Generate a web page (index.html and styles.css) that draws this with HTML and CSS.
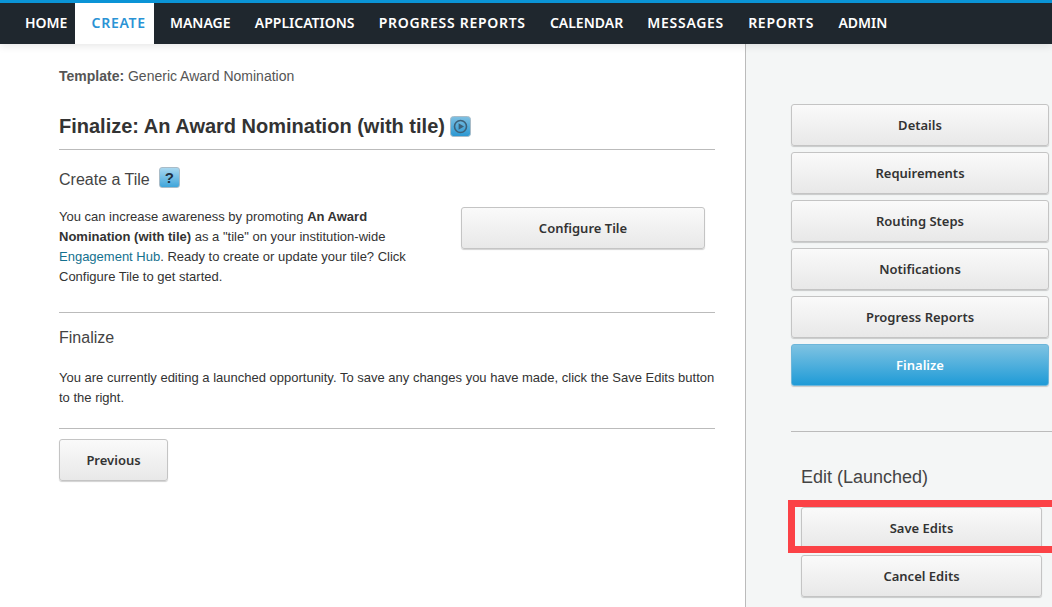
FILE: index.html
```html
<!DOCTYPE html>
<html lang="en">
<head>
<meta charset="utf-8">
<title>Finalize: An Award Nomination (with tile)</title>
<link rel="stylesheet" href="styles.css">
</head>
<body>
<nav class="topnav">
  <a class="nav-item">HOME</a>
  <a class="nav-item nav-wide active">CREATE</a>
  <a class="nav-item">MANAGE</a>
  <a class="nav-item">APPLICATIONS</a>
  <a class="nav-item nav-wide">PROGRESS REPORTS</a>
  <a class="nav-item">CALENDAR</a>
  <a class="nav-item nav-wide">MESSAGES</a>
  <a class="nav-item nav-wide">REPORTS</a>
  <a class="nav-item">ADMIN</a>
</nav>
<div class="layout">
  <main class="main">
    <p class="template"><b>Template:</b> Generic Award Nomination</p>
    <h1 class="title">Finalize: An Award Nomination (with tile)
      <svg class="icon-play" width="21" height="21" viewBox="0 0 21 21" aria-hidden="true">
        <defs><linearGradient id="gp" x1="0" y1="0" x2="0" y2="1"><stop offset="0" stop-color="#7fc0e2"/><stop offset="1" stop-color="#2a97d2"/></linearGradient></defs>
        <rect x=".5" y=".5" width="20" height="20" rx="3" fill="url(#gp)" stroke="#a9bcc8"/>
        <circle cx="10.5" cy="10.5" r="6" fill="none" stroke="#3d6078" stroke-width="1.6"/>
        <path d="M8.6 7.2 14 10.5 8.6 13.8Z" fill="#3d6078"/>
      </svg>
    </h1>
    <section class="section tile-section">
      <h2 class="subhead">Create a Tile<span class="help">?</span></h2>
      <div class="tile-row">
        <p class="body-text tile-text">You can increase awareness by promoting <b>An Award Nomination (with tile)</b> as a "tile" on your institution-wide <a class="link">Engagement Hub</a>. Ready to create or update your tile? Click Configure Tile to get started.</p>
        <a class="btn configure">Configure Tile</a>
      </div>
    </section>
    <section class="section finalize-section">
      <h2 class="subhead">Finalize</h2>
      <p class="body-text">You are currently editing a launched opportunity. To save any changes you have made, click the Save Edits button to the right.</p>
    </section>
    <div class="prev-row"><a class="btn prev">Previous</a></div>
  </main>
  <aside class="side">
    <div class="steps">
      <a class="btn">Details</a>
      <a class="btn">Requirements</a>
      <a class="btn">Routing Steps</a>
      <a class="btn">Notifications</a>
      <a class="btn">Progress Reports</a>
      <a class="btn current">Finalize</a>
    </div>
    <div class="edit">
      <h2 class="edit-head">Edit (Launched)</h2>
      <div class="edit-btns">
        <a class="btn">Save Edits</a>
        <a class="btn">Cancel Edits</a>
        <div class="highlight"></div>
      </div>
    </div>
  </aside>
</div>
</body>
</html>
```
FILE: styles.css
```css
* { box-sizing: border-box; }
html, body { margin: 0; height: 100%; overflow: hidden; }
body { font-family: "Liberation Sans", Arial, sans-serif; color: #333; background: #fff; }

.topnav {
  display: flex; align-items: stretch; gap: 24.2px;
  height: 44px; padding-left: 25px;
  background: #1f272e; border-top: 3px solid #0a94d6;
  position: relative; z-index: 2;
  box-shadow: 0 2px 8px rgba(0,0,0,.1);
}
.nav-item {
  font-family: "Noto Sans", sans-serif; font-weight: 600; font-size: 14px;
  color: #fff; display: flex; align-items: center; padding-bottom: 3px;
}
.nav-wide { letter-spacing: .7px; }
.nav-item.active {
  background: #fff; color: #2a93d5;
  padding: 0 8px 3px 17px; margin: 0 -8px 0 -17px;
}

.layout { display: flex; height: 563px; }
.main { width: 745px; padding: 0 30px 0 59px; }
.template { margin: 23px 0 0; font-size: 14px; line-height: 18px; color: #555; }
.title { margin: 28px 0 0; padding-bottom: 10px; font-size: 20px; line-height: 26px; font-weight: 700; color: #333; border-bottom: 1px solid #bbb; }
.icon-play { vertical-align: -4px; }

.section { border-bottom: 1px solid #bbb; }
.subhead { display: flex; align-items: flex-start; margin: 0; font-size: 16px; line-height: 20px; font-weight: 400; color: #444; }
.body-text { margin: 0; font-size: 13px; line-height: 20px; color: #333; }
.help {
  width: 21px; height: 21px; margin: -3px 0 0 9px;
  font-weight: 700; font-size: 15px; line-height: 19px; text-align: center; color: #1f3040;
  background: linear-gradient(#a9d8f0, #3fa5da); border: 1px solid #a9bcc8; border-radius: 3px;
}
.link { color: #14718f; }

.tile-section { padding: 20px 0 25px; }
.tile-row { display: flex; justify-content: space-between; align-items: flex-start; padding: 17px 10px 0 0; }
.tile-text { width: 360px; }

.finalize-section { padding: 15px 0 20px; }
.finalize-section .body-text { margin-top: 20px; }

.prev-row { padding-top: 10px; }

.btn {
  display: flex; align-items: center; justify-content: center;
  height: 42px; font-family: "Noto Sans", sans-serif; font-weight: 600; font-size: 13px; color: #333;
  background: linear-gradient(#fafafa, #e8e8e8);
  border: 1px solid #c4c4c4; border-radius: 3px;
  box-shadow: 0 1px 1px rgba(0,0,0,.18);
}
.configure { width: 244px; flex: none; }
.prev { width: 109px; }
.current { color: #fff; border-color: #6db6da; background: linear-gradient(#7fc3e2, #1f9bd7); }

.side { width: 307px; background: #f4f6f6; border-left: 1px solid #bbb; padding-left: 45px; }
.steps { display: flex; flex-direction: column; gap: 6px; padding: 60px 3px 45px 0; border-bottom: 1px solid #bbb; }
.edit { padding: 33px 10px 0 10px; }
.edit-head { margin: 0; font-size: 18px; line-height: 24px; font-weight: 400; color: #444; }
.edit-btns { display: flex; flex-direction: column; gap: 6px; margin-top: 18px; position: relative; }
.highlight {
  position: absolute; left: -13px; right: -10px; top: -7px; height: 53px;
  border: 7px solid #fb4246; border-right: 0;
}
```
